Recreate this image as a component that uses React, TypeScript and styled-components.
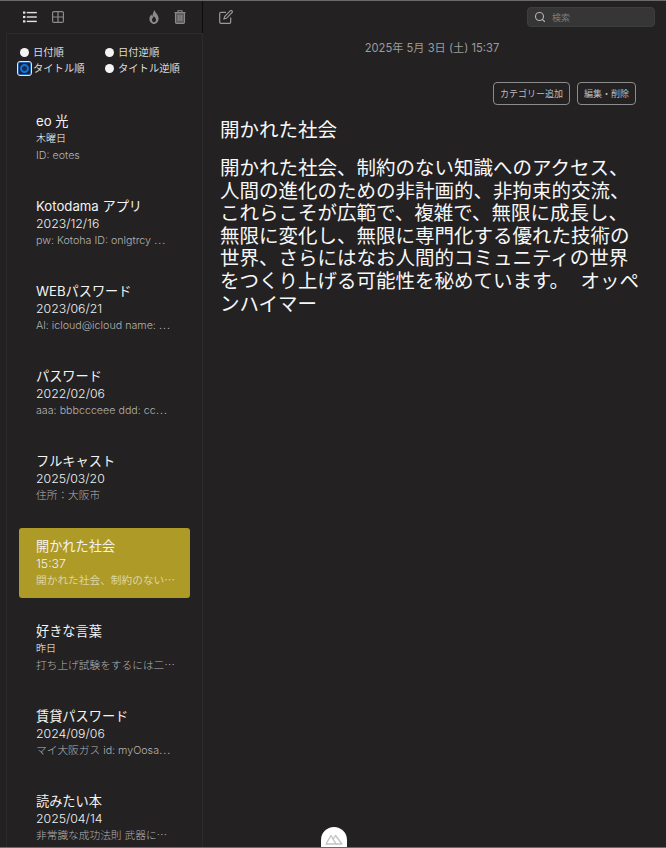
import React from 'react';
import styled, { createGlobalStyle } from 'styled-components';
import { Search } from 'lucide-react';

const notes = [
  { title: 'eo 光', date: '木曜日', wordDate: true, body: 'ID: eotes' },
  { title: 'Kotodama アプリ', date: '2023/12/16', body: 'pw: Kotoha ID: onlgtrcy ⋯' },
  { title: 'WEBパスワード', date: '2023/06/21', body: 'Al: icloud@icloud name: ⋯' },
  { title: 'パスワード', date: '2022/02/06', body: 'aaa: bbbccceee ddd: cc⋯' },
  { title: 'フルキャスト', date: '2025/03/20', body: '住所：大阪市' },
  { title: '開かれた社会', date: '15:37', body: '開かれた社会、制約のない⋯', active: true },
  { title: '好きな言葉', date: '昨日', wordDate: true, body: '打ち上げ試験をするには二⋯' },
  { title: '賃貸パスワード', date: '2024/09/06', body: 'マイ大阪ガス id: myOosa⋯' },
  { title: '読みたい本', date: '2025/04/14', body: '非常識な成功法則 武器に⋯' },
];

const sorts = [
  { label: '日付順' },
  { label: '日付逆順' },
  { label: 'タイトル順', checked: true },
  { label: 'タイトル逆順' },
];

const docLines = [
  '開かれた社会、制約のない知識へのアクセス、',
  '人間の進化のための非計画的、非拘束的交流、',
  'これらこそが広範で、複雑で、無限に成長し、',
  '無限に変化し、無限に専門化する優れた技術の',
  '世界、さらにはなお人間的コミュニティの世界',
  'をつくり上げる可能性を秘めています。\u3000\u200aオッペ',
  'ンハイマー',
];

export default function App() {
  return (
    <>
      <GlobalStyle />
      <Window>
        <Toolbar>
          <ToolLeft>
            <ViewIcons>
              <IconSlot>
                <svg width="14" height="12" viewBox="0 0 14 12" fill="#e4e4e4">
                  <rect x="0" y="0.5" width="2.4" height="2.2" />
                  <rect x="0" y="4.9" width="2.4" height="2.2" />
                  <rect x="0" y="9.3" width="2.4" height="2.2" />
                  <rect x="3.8" y="0.9" width="10" height="1.4" />
                  <rect x="3.8" y="5.3" width="10" height="1.4" />
                  <rect x="3.8" y="9.7" width="10" height="1.4" />
                </svg>
              </IconSlot>
              <IconSlot>
                <svg width="12" height="12" viewBox="0 0 12 12" fill="none" stroke="#8a8a8a" strokeWidth="1.2">
                  <rect x="0.6" y="0.6" width="10.8" height="10.8" rx="1.2" />
                  <path d="M6 0.6v10.8M0.6 6h10.8" />
                </svg>
              </IconSlot>
            </ViewIcons>
            <ActionIcons>
              <IconSlot>
                <svg width="10" height="14" viewBox="0 0 10 14" fill="#8a8a8a">
                  <path d="M5.4 0C5.9 2.3 9.6 4.7 9.6 8.7C9.6 11.6 7.5 13.8 5 14C2.5 13.8 0.4 11.6 0.4 8.9C0.4 6.9 1.4 5.4 2.5 4.3C2.5 5.3 2.8 6 3.3 6.5C3.5 4.3 4.4 2 5.4 0ZM5 6.3C4.2 7.5 3 8.5 3 9.9C3 10.9 3.8 11.8 5 12.3C6.2 11.8 7 10.9 7 9.9C7 8.5 5.8 7.5 5 6.3Z" fillRule="evenodd" />
                </svg>
              </IconSlot>
              <IconSlot>
                <svg width="12" height="14" viewBox="0 0 12 14" fill="none" stroke="#8a8a8a" strokeWidth="1.1">
                  <path d="M0.5 2.6h11M4 2.4V0.7h4v1.7" />
                  <rect x="1.5" y="2.8" width="9" height="10.6" rx="1.2" fill="#5a5a5a" />
                  <path d="M4.2 5v6M6 5v6M7.8 5v6" />
                </svg>
              </IconSlot>
            </ActionIcons>
          </ToolLeft>
          <ToolRight>
            <IconSlot>
              <svg width="14" height="14" viewBox="0 0 14 14" fill="none" stroke="#9a9a9a" strokeWidth="1.2">
                <path d="M7 2.3H2a1.3 1.3 0 0 0-1.3 1.3V12A1.3 1.3 0 0 0 2 13.3h8.4a1.3 1.3 0 0 0 1.3-1.3V7.4" />
                <path d="M11.2 0.9a1.2 1.2 0 0 1 1.8 1.8L7.4 8.3l-2.4 0.6 0.6-2.4z" />
              </svg>
            </IconSlot>
            <SearchBox>
              <Search size={12} color="#b4b4b4" strokeWidth={2.2} />
              <SearchText>検索</SearchText>
            </SearchBox>
          </ToolRight>
        </Toolbar>
        <Body>
          <Sidebar>
            <SortGrid>
              {sorts.map((s) => (
                <SortOption key={s.label}>
                  <Radio $checked={s.checked} />
                  {s.label}
                </SortOption>
              ))}
            </SortGrid>
            <NoteList>
              {notes.map((n) => (
                <NoteItem key={n.title} $active={n.active}>
                  <NoteTitle>{n.title}</NoteTitle>
                  <NoteDate $word={n.wordDate}>{n.date}</NoteDate>
                  <NoteBody $active={n.active}>{n.body}</NoteBody>
                </NoteItem>
              ))}
            </NoteList>
          </Sidebar>
          <Main>
            <Timestamp>2025年 5月 3日 (土) 15:37</Timestamp>
            <ButtonRow>
              <OutlineButton>カテゴリー追加</OutlineButton>
              <OutlineButton>編集・削除</OutlineButton>
            </ButtonRow>
            <DocTitle>開かれた社会</DocTitle>
            <DocBody>
              {docLines.map((line) => (
                <DocLine key={line}>{line}</DocLine>
              ))}
            </DocBody>
          </Main>
        </Body>
        <BottomTab>
          <svg width="18" height="12" viewBox="0 0 18 12" fill="none" stroke="#c4c4c4" strokeWidth="1.4" strokeLinejoin="round">
            <path d="M1 11L6 2.5L11 11Z" />
            <path d="M8 6.5L10.5 2.5L17 11H11" />
          </svg>
        </BottomTab>
      </Window>
    </>
  );
}

const GlobalStyle = createGlobalStyle`
  html, body {
    margin: 0;
    padding: 0;
    background: #232122;
  }
  body {
    font-family: Inter, "Noto Sans CJK JP", sans-serif;
  }
`;

const Window = styled.div`
  position: relative;
  width: 666px;
  height: 848px;
  overflow: hidden;
  display: flex;
  flex-direction: column;
  background: #232122;
  color: #fff;
  border-top: 1px solid #6a6a6a;
  border-bottom: 1px solid #6a6a6a;
  box-sizing: border-box;
`;

const Toolbar = styled.div`
  display: flex;
  height: 32px;
  flex-shrink: 0;
`;

const ToolLeft = styled.div`
  width: 203px;
  display: flex;
  justify-content: space-between;
  align-items: center;
  padding: 0 16px 0 23px;
  box-sizing: border-box;
  border-right: 1px solid #0c0c0c;
`;

const ViewIcons = styled.div`
  display: flex;
  gap: 15px;
  align-items: center;
`;

const ActionIcons = styled.div`
  display: flex;
  gap: 15px;
  align-items: center;
`;

const IconSlot = styled.span`
  display: inline-flex;
  align-items: center;
`;

const ToolRight = styled.div`
  flex: 1;
  display: flex;
  justify-content: space-between;
  align-items: center;
  padding: 0 11px 0 16px;
`;

const SearchBox = styled.div`
  width: 128px;
  height: 20px;
  box-sizing: border-box;
  border-radius: 4px;
  background: #363636;
  border: 1px solid #3e3e3e;
  display: flex;
  align-items: center;
  gap: 6px;
  padding-left: 6px;
`;

const SearchText = styled.span`
  font-size: 9px;
  color: #7d7d7d;
`;

const Body = styled.div`
  flex: 1;
  display: flex;
  min-height: 0;
`;

const Sidebar = styled.div`
  width: 197px;
  flex-shrink: 0;
  margin-left: 6px;
  box-sizing: border-box;
  border-top: 1px solid #2c2a2b;
  border-left: 1px solid #2c2a2b;
  border-right: 1px solid #2c2a2b;
  overflow: hidden;
`;

const SortGrid = styled.div`
  display: grid;
  grid-template-columns: 85px 90px;
  row-gap: 3px;
  padding: 12px 0 0 13px;
`;

const SortOption = styled.label`
  display: flex;
  align-items: center;
  font-size: 10.3px;
  line-height: 13px;
  color: #dcdcdc;
  gap: 4px;
`;

const Radio = styled.span<{ $checked?: boolean }>`
  position: relative;
  width: 9px;
  height: 9px;
  box-sizing: border-box;
  border-radius: 50%;
  flex-shrink: 0;
  background: ${(p) => (p.$checked ? '#16304f' : '#f4f4f4')};
  border: ${(p) => (p.$checked ? '2px solid #1272e6' : 'none')};

  &::after {
    content: '';
    display: ${(p) => (p.$checked ? 'block' : 'none')};
    position: absolute;
    inset: -5px;
    border: 1px solid #e8e8e8;
    border-radius: 3px;
    box-shadow: inset 0 0 0 1px #1d5fae;
  }
`;

const NoteList = styled.div`
  padding: 28px 12px 0 12px;
  display: flex;
  flex-direction: column;
  gap: 15px;
`;

const NoteItem = styled.div<{ $active?: boolean }>`
  height: 70px;
  flex-shrink: 0;
  box-sizing: border-box;
  padding: 9px 0 0 17px;
  border-radius: 3px;
  background: ${(p) => (p.$active ? '#ae9a27' : 'transparent')};
`;

const NoteTitle = styled.div`
  font-size: 13.2px;
  line-height: 18px;
  color: #f4f4f4;
  white-space: nowrap;
`;

const NoteDate = styled.div<{ $word?: boolean }>`
  font-size: ${(p) => (p.$word ? '10px' : '12.3px')};
  font-weight: 300;
  line-height: 15px;
  margin-top: 1px;
  color: ${(p) => (p.$word ? '#fff' : '#f2f2f2')};
`;

const NoteBody = styled.div<{ $active?: boolean }>`
  font-size: 10.7px;
  font-weight: ${(p) => (p.$active ? 400 : 300)};
  line-height: 15px;
  margin-top: 2px;
  color: ${(p) => (p.$active ? '#dcd6a8' : '#b4b4b4')};
  white-space: nowrap;
`;

const Main = styled.div`
  flex: 1;
  min-width: 0;
  padding: 8px 30px 0 17px;
`;

const Timestamp = styled.div`
  text-align: center;
  font-size: 11.2px;
  line-height: 14px;
  color: #9c9c9c;
  padding-left: 8px;
`;

const ButtonRow = styled.div`
  display: flex;
  justify-content: flex-end;
  gap: 7px;
  margin-top: 27px;
`;

const OutlineButton = styled.button`
  height: 23px;
  padding: 0 6px;
  border-radius: 4px;
  background: transparent;
  border: 1px solid #8c8c8c;
  color: #bdbdbd;
  font-family: inherit;
  font-size: 9px;
`;

const DocTitle = styled.h1`
  margin: 13px 0 0;
  font-size: 19.5px;
  line-height: 24px;
  font-weight: 400;
  color: #f7f7f7;
`;

const DocBody = styled.div`
  margin: 15px 0 0;
  font-size: 19.5px;
  line-height: 22.6px;
  color: #f7f7f7;
`;

const DocLine = styled.div`
  white-space: nowrap;
`;

const BottomTab = styled.div`
  position: absolute;
  left: 321px;
  bottom: 0;
  width: 26px;
  height: 20px;
  background: #fff;
  border-radius: 13px 13px 0 0;
  display: flex;
  align-items: flex-end;
  justify-content: center;
  padding-bottom: 2px;
  box-sizing: border-box;
`;
